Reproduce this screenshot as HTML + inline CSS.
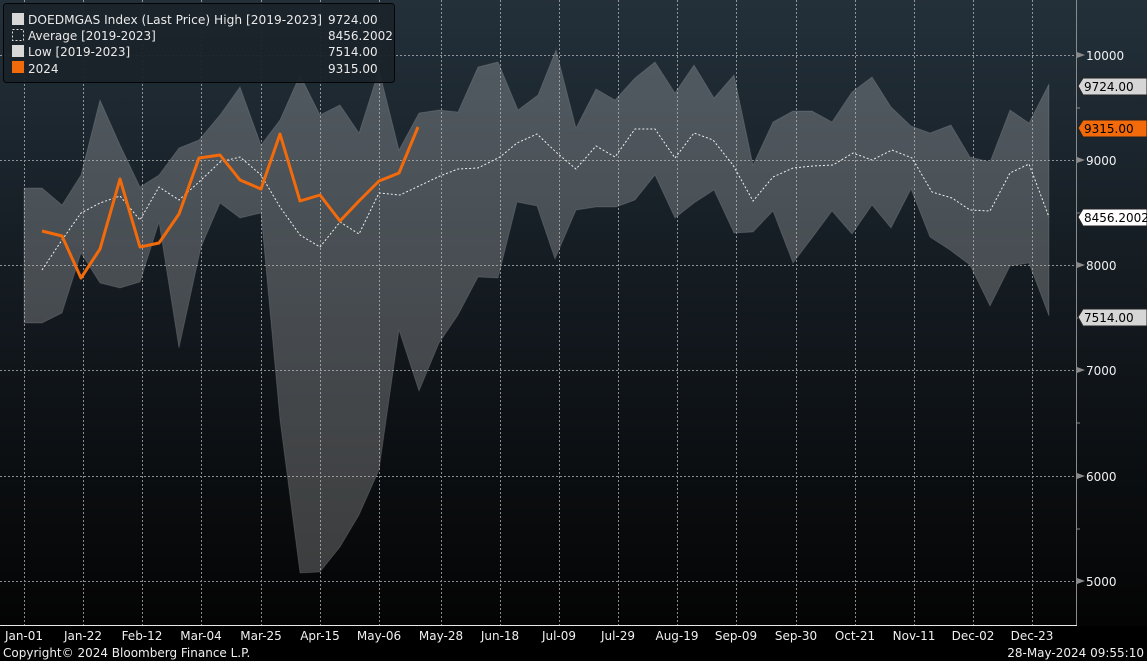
<!DOCTYPE html>
<html><head><meta charset="utf-8"><style>
html,body{margin:0;padding:0;background:#000;width:1147px;height:661px;overflow:hidden}
svg{display:block}
text{font-family:"DejaVu Sans","Liberation Sans",sans-serif}
</style></head><body>
<svg width="1147" height="661" viewBox="0 0 1147 661" xmlns="http://www.w3.org/2000/svg">
<defs>
<linearGradient id="bg" x1="0" y1="0" x2="0" y2="1">
<stop offset="0" stop-color="#23303a"/>
<stop offset="0.45" stop-color="#141b21"/>
<stop offset="1" stop-color="#040404"/>
</linearGradient>
</defs>
<rect x="0" y="0" width="1147" height="626" fill="url(#bg)"/>
<rect x="0" y="626" width="1147" height="35" fill="#000"/>
<polygon fill="rgba(255,255,255,0.22)" stroke="rgba(255,255,255,0.12)" stroke-width="1" points="
24,188 42,188 62,205 81,175 100,100 120,145 140,187 159,175 179,148 199,140 220,115 240,87 261,145 280,120 300,75 320,115 340,105 359,133 379,70 399,150 419,113 439,110 458,112 478,67 498,62 518,110 538,95 556,50 576,128 596,89 615,100 635,78 655,62 675,93 694,65 714,98 734,75 753,165 773,122 793,111 812,111 832,122 852,92 872,77 891,107 911,126 930,133 951,125 970,157 990,162 1010,110 1029,123 1049,84
1049,316 1029,263 1010,266 990,306 970,265 950,250 930,237 911,189 891,228 872,205 852,234 832,211 812,238 793,263 773,211 753,232 734,233 714,190 694,203 675,218 655,175 635,200 616,207 596,207 576,210 555,259 537,206 517,202 498,278 478,277 458,315 439,343 419,391 399,330 379,470 359,515 340,547 320,572 300,573 280,420 261,213 240,218 220,203 201,247 179,348 159,222 140,282 120,288 100,283 81,253 62,313 42,323 24,323"/>
<g stroke="#b8b8b8" stroke-width="1" stroke-dasharray="2,2" opacity="0.75">
<line x1="0" y1="55.5" x2="1076" y2="55.5"/>
<line x1="0" y1="160.5" x2="1076" y2="160.5"/>
<line x1="0" y1="265.5" x2="1076" y2="265.5"/>
<line x1="0" y1="370.5" x2="1076" y2="370.5"/>
<line x1="0" y1="476.5" x2="1076" y2="476.5"/>
<line x1="0" y1="581.5" x2="1076" y2="581.5"/>
<line x1="24.5" y1="0" x2="24.5" y2="625"/><line x1="83.5" y1="0" x2="83.5" y2="625"/><line x1="142.5" y1="0" x2="142.5" y2="625"/><line x1="201.5" y1="0" x2="201.5" y2="625"/><line x1="261.5" y1="0" x2="261.5" y2="625"/><line x1="320.5" y1="0" x2="320.5" y2="625"/><line x1="379.5" y1="0" x2="379.5" y2="625"/><line x1="441.5" y1="0" x2="441.5" y2="625"/><line x1="500.5" y1="0" x2="500.5" y2="625"/><line x1="559.5" y1="0" x2="559.5" y2="625"/><line x1="618.5" y1="0" x2="618.5" y2="625"/><line x1="677.5" y1="0" x2="677.5" y2="625"/><line x1="736.5" y1="0" x2="736.5" y2="625"/><line x1="796.5" y1="0" x2="796.5" y2="625"/><line x1="855.5" y1="0" x2="855.5" y2="625"/><line x1="914.5" y1="0" x2="914.5" y2="625"/><line x1="973.5" y1="0" x2="973.5" y2="625"/><line x1="1032.5" y1="0" x2="1032.5" y2="625"/>
</g>
<polyline fill="none" stroke="#f0f0f0" stroke-width="1" stroke-dasharray="2,2" points="42,270 62,240 81,213 100,203 120,196 140,220 159,187 179,200 199,182 220,162 240,157 261,175 280,207 300,235 320,247 340,222 359,234 379,193 400,195 419,186 440,176 458,169 478,168 500,157 517,143 537,134 557,153 576,169 596,146 615,157 635,129 655,129 675,158 694,133 713,140 733,165 753,201 773,177 793,168 813,166 833,165 853,153 872,160 892,150 912,158 932,192 952,198 970,210 990,211 1010,173 1029,164 1049,217"/>
<polyline fill="none" stroke="#f26a0a" stroke-width="3" stroke-linejoin="round" points="42,231 62,236 81,278 100,249 120,179 140,247 159,243 179,214 199,158 220,155 240,180 261,189 280,134 300,201 320,195 340,221 359,201 379,181 399,173 418,127"/>
<line x1="1076.5" y1="0" x2="1076.5" y2="625" stroke="#8a8a8a"/>
<line x1="0" y1="625.5" x2="1077" y2="625.5" stroke="#e8e8e8"/>
<g stroke="#8a8a8a"><line x1="1076" y1="108" x2="1080" y2="108"/><line x1="1076" y1="213" x2="1080" y2="213"/><line x1="1076" y1="318" x2="1080" y2="318"/><line x1="1076" y1="423" x2="1080" y2="423"/><line x1="1076" y1="529" x2="1080" y2="529"/></g>
<g fill="#8a8a8a">
<polygon points="1077,52 1085,55 1077,58"/><polygon points="1077,157 1085,160 1077,163"/><polygon points="1077,262 1085,265 1077,268"/><polygon points="1077,367 1085,370 1077,373"/><polygon points="1077,473 1085,476 1077,479"/><polygon points="1077,578 1085,581 1077,584"/>
</g>
<g fill="#f0f0f0" font-size="12">
<text x="1086" y="60">10000</text><text x="1086" y="165">9000</text><text x="1086" y="270">8000</text><text x="1086" y="375">7000</text><text x="1086" y="481">6000</text><text x="1086" y="586">5000</text>
</g>
<polygon points="1078,86 1083,78 1147,78 1147,95 1083,95" fill="#d6d6d6" stroke="#222"/>
<text x="1084" y="91" font-size="12" fill="#000">9724.00</text>
<polygon points="1078,128 1083,120 1147,120 1147,137 1083,137" fill="#f26a0a" stroke="#222"/>
<text x="1084" y="133" font-size="12" fill="#000">9315.00</text>
<polygon points="1078,217 1083,209 1147,209 1147,226 1083,226" fill="#ffffff" stroke="#222"/>
<text x="1084" y="222" font-size="12" fill="#000">8456.2002</text>
<polygon points="1078,317 1083,309 1147,309 1147,326 1083,326" fill="#d6d6d6" stroke="#222"/>
<text x="1084" y="322" font-size="12" fill="#000">7514.00</text>
<g fill="#f0f0f0" font-size="12" text-anchor="middle">
<text x="24" y="640">Jan-01</text><text x="83" y="640">Jan-22</text><text x="142" y="640">Feb-12</text><text x="201" y="640">Mar-04</text><text x="261" y="640">Mar-25</text><text x="320" y="640">Apr-15</text><text x="379" y="640">May-06</text><text x="441" y="640">May-28</text><text x="500" y="640">Jun-18</text><text x="559" y="640">Jul-09</text><text x="618" y="640">Jul-29</text><text x="677" y="640">Aug-19</text><text x="736" y="640">Sep-09</text><text x="796" y="640">Sep-30</text><text x="855" y="640">Oct-21</text><text x="914" y="640">Nov-11</text><text x="973" y="640">Dec-02</text><text x="1032" y="640">Dec-23</text>
</g>
<text x="3" y="657" font-size="12" fill="#f0f0f0">Copyright© 2024 Bloomberg Finance L.P.</text>
<text x="1144" y="657" font-size="12" fill="#f0f0f0" text-anchor="end">28-May-2024 09:55:10</text>
<rect x="3.5" y="3.5" width="391" height="79" rx="3" fill="#1b232a" fill-opacity="0.95" stroke="#050505"/>
<rect x="12" y="13" width="12" height="12" fill="#d8d8d8"/>
<rect x="12.5" y="29.5" width="11" height="11" fill="none" stroke="#e0e0e0" stroke-dasharray="2,2"/>
<rect x="12" y="45" width="12" height="12" fill="#d8d8d8"/>
<rect x="12" y="61" width="12" height="12" fill="#f26a0a"/>
<g fill="#eaeaea" font-size="12">
<text x="28" y="24" textLength="294" lengthAdjust="spacingAndGlyphs">DOEDMGAS Index (Last Price) High [2019-2023]</text>
<text x="28" y="40">Average  [2019-2023]</text>
<text x="28" y="56">Low  [2019-2023]</text>
<text x="28" y="73">2024</text>
<text x="328" y="24">9724.00</text>
<text x="328" y="40">8456.2002</text>
<text x="328" y="56">7514.00</text>
<text x="328" y="73">9315.00</text>
</g>
</svg>
</body></html>
